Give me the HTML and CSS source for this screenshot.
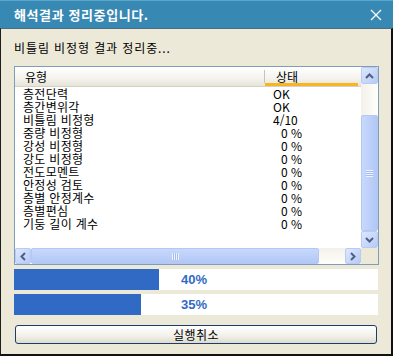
FILE: index.html
```html
<!DOCTYPE html>
<html lang="ko">
<head>
<meta charset="utf-8">
<link rel="stylesheet" href="styles.css">
</head>
<body>
<div class="window">
  <div class="titlebar">
    <span class="title">해석결과 정리중입니다.</span>
    <svg class="close" width="12" height="12" viewBox="0 0 12 12"><path d="M1 1 L11 11 M11 1 L1 11" stroke="#fff" stroke-width="1.3" fill="none"/></svg>
  </div>
  <div class="body">
    <div class="msg">비틀림 비정형 결과 정리중...</div>
    <div class="listbox">
      <div class="list-main">
        <div class="list-area">
          <div class="header">
            <div class="hcol c1">유형</div>
            <div class="hcol c2">상태</div>
            <div class="hcol c3"></div>
          </div>
          <div class="rows">
            <div class="row"><span class="c1">층전단력</span><span class="c2">OK</span></div>
            <div class="row"><span class="c1">층간변위각</span><span class="c2">OK</span></div>
            <div class="row"><span class="c1">비틀림 비정형</span><span class="c2">4/10</span></div>
            <div class="row"><span class="c1">중량 비정형</span><span class="c2 pct">0 %</span></div>
            <div class="row"><span class="c1">강성 비정형</span><span class="c2 pct">0 %</span></div>
            <div class="row"><span class="c1">강도 비정형</span><span class="c2 pct">0 %</span></div>
            <div class="row"><span class="c1">전도모멘트</span><span class="c2 pct">0 %</span></div>
            <div class="row"><span class="c1">안정성 검토</span><span class="c2 pct">0 %</span></div>
            <div class="row"><span class="c1">층별 안정계수</span><span class="c2 pct">0 %</span></div>
            <div class="row"><span class="c1">층별편심</span><span class="c2 pct">0 %</span></div>
            <div class="row"><span class="c1">기둥 길이 계수</span><span class="c2 pct">0 %</span></div>
          </div>
        </div>
        <div class="vscroll">
          <div class="sbtn"><svg width="9" height="6" viewBox="0 0 9 6"><path d="M1 5 L4.5 1.5 L8 5" stroke="#4d6185" stroke-width="2" fill="none"/></svg></div>
          <div class="vtrack">
            <div class="vthumb"><div class="vgrip"></div></div>
          </div>
          <div class="sbtn"><svg width="9" height="6" viewBox="0 0 9 6"><path d="M1 1 L4.5 4.5 L8 1" stroke="#4d6185" stroke-width="2" fill="none"/></svg></div>
        </div>
      </div>
      <div class="hrow">
        <div class="hscroll">
          <div class="sbtn hbtn"><svg width="6" height="9" viewBox="0 0 6 9"><path d="M5 1 L1.5 4.5 L5 8" stroke="#4d6185" stroke-width="2" fill="none"/></svg></div>
          <div class="htrack">
            <div class="hthumb"><div class="hgrip"></div></div>
          </div>
          <div class="sbtn hbtn"><svg width="6" height="9" viewBox="0 0 6 9"><path d="M1 1 L4.5 4.5 L1 8" stroke="#4d6185" stroke-width="2" fill="none"/></svg></div>
        </div>
        <div class="corner"></div>
      </div>
    </div>
    <div class="progress"><div class="fill" style="width:145px"></div><span class="ptext">40%</span></div>
    <div class="progress"><div class="fill" style="width:127px"></div><span class="ptext">35%</span></div>
    <button class="btn">실행취소</button>
  </div>
</div>
</body>
</html>
```
FILE: styles.css
```css
* { box-sizing: border-box; }
html, body { margin: 0; padding: 0; }
body {
  width: 393px;
  height: 356px;
  overflow: hidden;
  background: #ece9d8;
  font-family: "Noto Sans CJK KR", "Noto Sans", sans-serif;
  font-size: 12px;
  color: #000;
}
.window {
  width: 393px;
  height: 356px;
  display: flex;
  flex-direction: column;
}
.titlebar {
  height: 28px;
  background: #3788b3;
  border-top: 1px solid #5aa7cc;
  display: flex;
  align-items: center;
  justify-content: space-between;
  padding: 0 11px 0 14px;
  flex: none;
}
.title {
  color: #fff;
  font-weight: bold;
  font-size: 13px;
  letter-spacing: 0.6px;
}
.close { display: block; }
.body {
  flex: 1;
  border-left: 1px solid #1d1d1d;
  border-right: 2px solid #111;
  border-bottom: 2px solid #111;
  border-top: 1px solid #4f6d80;
  padding: 0 0 0 13px;
  display: flex;
  flex-direction: column;
}
.msg {
  height: 37px;
  line-height: 38px;
  padding-left: 0;
  letter-spacing: 0.9px;
}
.listbox {
  width: 365px;
  height: 199px;
  border: 1px solid #7f9db9;
  background: #fff;
  display: flex;
  flex-direction: column;
}
.list-main {
  display: flex;
  flex: 1;
  min-height: 0;
}
.list-area {
  flex: 1;
  overflow: hidden;
  display: flex;
  flex-direction: column;
}
.header {
  height: 20px;
  display: flex;
  background: linear-gradient(#ffffff, #f4f3ee 60%, #e6e4d8);
  border-bottom: 1px solid #d6d2c2;
  flex: none;
}
.hcol {
  line-height: 19px;
  font-size: 12px;
}
.header .c1 {
  width: 250px;
  padding-left: 10px;
  border-right: 1px solid #c7c5b2;
  margin: 3px 0;
  line-height: 13px;
}
.header .c2 {
  width: 93px;
  padding-left: 11px;
  border-bottom: 3px solid #f8b522;
}
.header .c3 { flex: 1; }
.rows {
  flex: 1;
  padding-top: 0;
}
.row {
  height: 13px;
  line-height: 13px;
  display: flex;
  white-space: nowrap;
}
.row .c1 {
  width: 251px;
  padding-left: 8px;
  letter-spacing: 0.3px;
}
.row .c2 {
  padding-left: 7px;
}
.row .pct {
  padding-left: 15px;
}
.vscroll {
  width: 17px;
  display: flex;
  flex-direction: column;
  background: linear-gradient(90deg, #f3f1ea, #fefefb);
  flex: none;
}
.sbtn {
  width: 17px;
  height: 17px;
  border: 1px solid #b9cbf3;
  border-radius: 2px;
  background: linear-gradient(135deg, #dde8fe, #b6caf7);
  display: flex;
  align-items: center;
  justify-content: center;
  flex: none;
}
.vtrack {
  flex: 1;
  padding-top: 31px;
  display: flex;
  flex-direction: column;
}
.vthumb {
  flex: 1;
  border: 1px solid #b4c8f6;
  border-radius: 2px;
  background: linear-gradient(90deg, #c9d8fc, #bcd0fa 50%, #b3c7f6);
  display: flex;
  align-items: center;
  justify-content: center;
}
.vgrip {
  width: 7px;
  height: 7px;
  background: repeating-linear-gradient(#eef3fe 0 1px, #a7bcee 1px 2px);
}
.hrow {
  display: flex;
  height: 16px;
  flex: none;
}
.hscroll {
  flex: 1;
  display: flex;
  background: linear-gradient(#f3f1ea, #fefefb);
}
.hbtn {
  width: 16px;
  height: 16px;
}
.htrack {
  flex: 1;
  padding-right: 26px;
  display: flex;
}
.hthumb {
  flex: 1;
  border: 1px solid #b4c8f6;
  border-radius: 2px;
  background: linear-gradient(#c9d8fc, #bcd0fa 50%, #b3c7f6);
  display: flex;
  align-items: center;
  justify-content: center;
}
.hgrip {
  width: 7px;
  height: 7px;
  background: repeating-linear-gradient(90deg, #eef3fe 0 1px, #a7bcee 1px 2px);
}
.corner {
  width: 17px;
  background: #ece9d8;
}
.progress {
  position: relative;
  width: 364px;
  height: 21px;
  background: #fff;
  margin-top: 4px;
  display: flex;
  align-items: center;
}
.progress:first-of-type { margin-top: 6px; }
.fill {
  height: 100%;
  background: #316ac5;
}
.ptext {
  position: absolute;
  left: 167px;
  top: 0;
  line-height: 21px;
  font-weight: bold;
  color: #316ac5;
  font-family: "Liberation Sans", sans-serif;
  font-size: 13px;
}
.btn {
  margin-top: 10px;
  margin-left: 1px;
  width: 362px;
  height: 19px;
  border: 1px solid #1b3f6a;
  border-radius: 3px;
  background: linear-gradient(#ffffff, #f1f0ea 60%, #dedbcd);
  font-family: "Noto Sans CJK KR", sans-serif;
  font-size: 12px;
  line-height: 15px;
  padding: 0;
  color: #000;
  letter-spacing: 0.5px;
}
```
